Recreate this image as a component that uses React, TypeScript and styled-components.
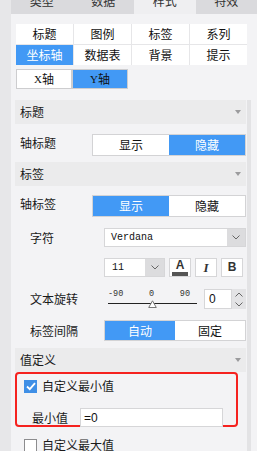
import React from 'react';
import styled, { createGlobalStyle } from 'styled-components';

const Global = createGlobalStyle`
  html, body { margin: 0; padding: 0; }
  body {
    width: 257px; height: 451px; overflow: hidden;
    background: #f3f3f5;
    font-family: "Noto Sans CJK SC", "Noto Sans", sans-serif;
    font-size: 12px; color: #1a1a1a;
  }
`;

const BLUE = '#4299f5';

const Frame = styled.div`
  display: flex; width: 257px; height: 451px; overflow: hidden;
`;
const SideStrip = styled.div`
  width: 11px; flex: none; background: #e7e7e9;
`;
const Main = styled.div`
  flex: 1; min-width: 0; display: flex; flex-direction: column; background: #f3f3f5;
`;
const TabBar = styled.div`
  height: 14px; flex: none; overflow: hidden; background: #dadadd;
`;
const TabRow = styled.div`
  display: grid; grid-template-columns: repeat(4, 1fr); height: 28px; margin-top: -13px;
`;
const Tab = styled.div<{ $active?: boolean }>`
  display: flex; align-items: center; justify-content: center;
  background: ${p => (p.$active ? '#efeff1' : 'transparent')};
  color: #333; font-size: 12px; line-height: 16px;
`;
const KindGrid = styled.div`
  display: grid; grid-template-columns: repeat(4, 57px); grid-auto-rows: 20px; gap: 1px;
  margin: 10px 0 0 5px; width: fit-content; background: #e6e6e8;
`;
const KindButton = styled.div<{ $active?: boolean }>`
  display: flex; align-items: center; justify-content: center;
  background: ${p => (p.$active ? BLUE : '#fff')};
  color: ${p => (p.$active ? '#fff' : '#111')};
  font-size: 12px; line-height: 16px;
`;
const AxisRow = styled.div`
  display: flex; margin: 4px 0 0 5px;
`;
const AxisButton = styled.div<{ $active?: boolean }>`
  box-sizing: border-box; width: 56px; height: 20px;
  display: flex; align-items: center; justify-content: center;
  border: 1px solid #cdcdcf;
  background: ${p => (p.$active ? BLUE : '#fff')};
  color: #111; font-size: 12px; line-height: 16px;
`;
const Latin = styled.span`
  font-family: "Liberation Serif", serif; font-size: 11px;
`;
const Body = styled.div`
  display: flex; margin-top: 11px; flex: 1; min-height: 0;
`;
const Panel = styled.div`
  width: 231px; margin-left: 4px; flex: none; display: flex; flex-direction: column;
`;
const Scrollbar = styled.div`
  width: 4px; margin-left: 1px; flex: none; background: #e3e3e5;
`;
const Header = styled.div<{ $mt?: number }>`
  height: 24px; flex: none; margin-top: ${p => p.$mt ?? 0}px;
  display: flex; align-items: center; justify-content: space-between;
  padding: 0 5px; background: #ebebec; font-size: 12px; line-height: 16px;
`;
const Caret = styled.span`
  width: 0; height: 0;
  border-left: 3.5px solid transparent; border-right: 3.5px solid transparent;
  border-top: 4px solid #9b9b9d;
`;
const Row = styled.div<{ $mt: number; $indent: number; $top?: boolean }>`
  display: flex; align-items: ${p => (p.$top ? 'flex-start' : 'center')};
  margin-top: ${p => p.$mt}px; padding-left: ${p => p.$indent}px; flex: none;
`;
const Label = styled.div<{ $w: number }>`
  width: ${p => p.$w}px; flex: none; font-size: 12px; line-height: 18px; color: #1a1a1a;
`;
const Toggle = styled.div<{ $w: number; $h: number }>`
  box-sizing: border-box; display: flex; width: ${p => p.$w}px; height: ${p => p.$h}px;
  border: 1px solid #d3d3d5; background: #fff;
`;
const ToggleHalf = styled.div<{ $active?: boolean }>`
  flex: 1; display: flex; align-items: center; justify-content: center;
  background: ${p => (p.$active ? BLUE : '#fff')};
  color: ${p => (p.$active ? '#fff' : '#111')};
  font-size: 12px; line-height: 16px;
`;
const Select = styled.div<{ $w: number }>`
  box-sizing: border-box; display: flex; width: ${p => p.$w}px; height: 19px;
  border: 1px solid #d6d6d8; background: #fff;
`;
const SelectText = styled.div<{ $pl: number }>`
  flex: 1; display: flex; align-items: center; padding-left: ${p => p.$pl}px;
  font-family: "Liberation Mono", monospace; font-size: 10px; color: #111;
`;
const SelectArrow = styled.div<{ $w: number }>`
  width: ${p => p.$w}px; flex: none; display: flex; align-items: center; justify-content: center;
  background: #dcdcde;
`;
const StyleButton = styled.div`
  box-sizing: border-box; width: 22px; height: 19px; margin-left: 4px; flex: none;
  display: flex; flex-direction: column; align-items: center; justify-content: center;
  border: 1px solid #d6d6d8; background: #fff; color: #333;
`;
const ColorA = styled.span`
  font-family: "Liberation Sans", Arial, sans-serif; font-weight: bold; font-size: 12px;
  line-height: 11px; color: #333;
`;
const ColorBar = styled.span`
  width: 16px; height: 4px; background: #555; margin-top: 1px;
`;
const ItalicI = styled.span`
  font-family: "Liberation Serif", serif; font-style: italic; font-weight: bold;
  font-size: 13px; line-height: 13px; color: #333;
`;
const BoldB = styled.span`
  font-family: "Liberation Sans", Arial, sans-serif; font-weight: bold; font-size: 12px;
  line-height: 13px; color: #333;
`;
const Slider = styled.div`
  position: relative; width: 89px; height: 20px; flex: none;
`;
const SliderTicks = styled.div`
  display: flex; justify-content: space-between; padding-right: 7px;
  font-family: "Liberation Mono", monospace; font-size: 8.5px; line-height: 9px; color: #333;
  margin-top: 1px;
`;
const SliderLine = styled.div`
  position: absolute; left: 0; right: 0; top: 14px; height: 1px; background: #222;
`;
const SliderThumb = styled.svg`
  position: absolute; left: 40px; top: 11px;
`;
const Spinner = styled.div`
  display: flex; margin-left: 7px; height: 20px; flex: none;
`;
const SpinInput = styled.div`
  box-sizing: border-box; width: 28px; height: 20px; border: 1px solid #d6d6d8; background: #fff;
  display: flex; align-items: center; padding-left: 4px;
  font-family: "Liberation Sans", Arial, sans-serif; font-size: 12px; color: #111;
`;
const SpinButtons = styled.div`
  width: 14px; display: flex; flex-direction: column; align-items: center; justify-content: space-around;
  background: #e3e3e5;
`;
const RedBox = styled.div`
  box-sizing: border-box; width: 223px; height: 55px; flex: none;
  border: 2px solid #f5221f; border-radius: 4px; padding: 4px 0 0 7px;
  display: flex; flex-direction: column;
`;
const CheckRow = styled.div<{ $mt?: number; $indent?: number }>`
  display: flex; align-items: center; flex: none;
  margin-top: ${p => p.$mt ?? 0}px; padding-left: ${p => p.$indent ?? 0}px;
`;
const CheckBox = styled.span<{ $checked?: boolean }>`
  box-sizing: border-box; width: 13px; height: 13px; flex: none;
  display: flex; align-items: center; justify-content: center;
  background: ${p => (p.$checked ? '#3f8fe6' : '#fff')};
  border: 1px solid ${p => (p.$checked ? '#3f8fe6' : '#8c8c8e')};
`;
const CheckText = styled.span`
  margin-left: 5px; font-size: 12px; line-height: 16px; color: #1a1a1a;
`;
const MinRow = styled.div`
  display: flex; align-items: center; margin-top: 14px; padding-left: 8px;
`;
const TextInput = styled.div`
  box-sizing: border-box; width: 143px; height: 19px; border: 1px solid #d6d6d8; background: #fff;
  display: flex; align-items: center; padding-left: 3px;
  font-family: "Liberation Sans", Arial, sans-serif; font-size: 12px; color: #111;
`;

const Chevron = ({ up }: { up?: boolean }) => (
  <svg width="8" height="5" viewBox="0 0 8 5">
    <polyline
      points={up ? '0.5,4.5 4,1 7.5,4.5' : '0.5,0.5 4,4 7.5,0.5'}
      fill="none" stroke="#666" strokeWidth="1"
    />
  </svg>
);

export default function App() {
  return (
    <>
      <Global />
      <Frame>
        <SideStrip />
        <Main>
          <TabBar>
            <TabRow>
              <Tab>类型</Tab>
              <Tab>数据</Tab>
              <Tab $active>样式</Tab>
              <Tab>特效</Tab>
            </TabRow>
          </TabBar>
          <KindGrid>
            <KindButton>标题</KindButton>
            <KindButton>图例</KindButton>
            <KindButton>标签</KindButton>
            <KindButton>系列</KindButton>
            <KindButton $active>坐标轴</KindButton>
            <KindButton>数据表</KindButton>
            <KindButton>背景</KindButton>
            <KindButton>提示</KindButton>
          </KindGrid>
          <AxisRow>
            <AxisButton><Latin>X</Latin>轴</AxisButton>
            <AxisButton $active><Latin>Y</Latin>轴</AxisButton>
          </AxisRow>
          <Body>
            <Panel>
              <Header>标题<Caret /></Header>
              <Row $mt={10} $indent={5} $top>
                <Label $w={72}>轴标题</Label>
                <Toggle $w={154} $h={22}>
                  <ToggleHalf>显示</ToggleHalf>
                  <ToggleHalf $active>隐藏</ToggleHalf>
                </Toggle>
              </Row>
              <Header $mt={6}>标签<Caret /></Header>
              <Row $mt={9} $indent={5} $top>
                <Label $w={72}>轴标签</Label>
                <Toggle $w={154} $h={22}>
                  <ToggleHalf $active>显示</ToggleHalf>
                  <ToggleHalf>隐藏</ToggleHalf>
                </Toggle>
              </Row>
              <Row $mt={11} $indent={15}>
                <Label $w={74}>字符</Label>
                <Select $w={142}>
                  <SelectText $pl={6}>Verdana</SelectText>
                  <SelectArrow $w={18}><Chevron /></SelectArrow>
                </Select>
              </Row>
              <Row $mt={11} $indent={89}>
                <Select $w={61}>
                  <SelectText $pl={7}>11</SelectText>
                  <SelectArrow $w={19}><Chevron /></SelectArrow>
                </Select>
                <StyleButton><ColorA>A</ColorA><ColorBar /></StyleButton>
                <StyleButton><ItalicI>I</ItalicI></StyleButton>
                <StyleButton><BoldB>B</BoldB></StyleButton>
              </Row>
              <Row $mt={12} $indent={15}>
                <Label $w={78}>文本旋转</Label>
                <Slider>
                  <SliderTicks><span>-90</span><span>0</span><span>90</span></SliderTicks>
                  <SliderLine />
                  <SliderThumb width="9" height="8" viewBox="0 0 9 8">
                    <polygon points="4.5,0.8 8.3,7.5 0.7,7.5" fill="#fff" stroke="#777" strokeWidth="1" />
                  </SliderThumb>
                </Slider>
                <Spinner>
                  <SpinInput>0</SpinInput>
                  <SpinButtons><Chevron up /><Chevron /></SpinButtons>
                </Spinner>
              </Row>
              <Row $mt={11} $indent={15}>
                <Label $w={74}>标签间隔</Label>
                <Toggle $w={142} $h={21}>
                  <ToggleHalf $active>自动</ToggleHalf>
                  <ToggleHalf>固定</ToggleHalf>
                </Toggle>
              </Row>
              <Header $mt={7}>值定义<Caret /></Header>
              <RedBox>
                <CheckRow>
                  <CheckBox $checked>
                    <svg width="10" height="9" viewBox="0 0 10 9">
                      <polyline points="1,4.5 3.8,7.2 9,1.2" fill="none" stroke="#fff" strokeWidth="1.8" />
                    </svg>
                  </CheckBox>
                  <CheckText>自定义最小值</CheckText>
                </CheckRow>
                <MinRow>
                  <Label $w={48}>最小值</Label>
                  <TextInput>=0</TextInput>
                </MinRow>
              </RedBox>
              <CheckRow $mt={10} $indent={9}>
                <CheckBox />
                <CheckText>自定义最大值</CheckText>
              </CheckRow>
            </Panel>
            <Scrollbar />
          </Body>
        </Main>
      </Frame>
    </>
  );
}
